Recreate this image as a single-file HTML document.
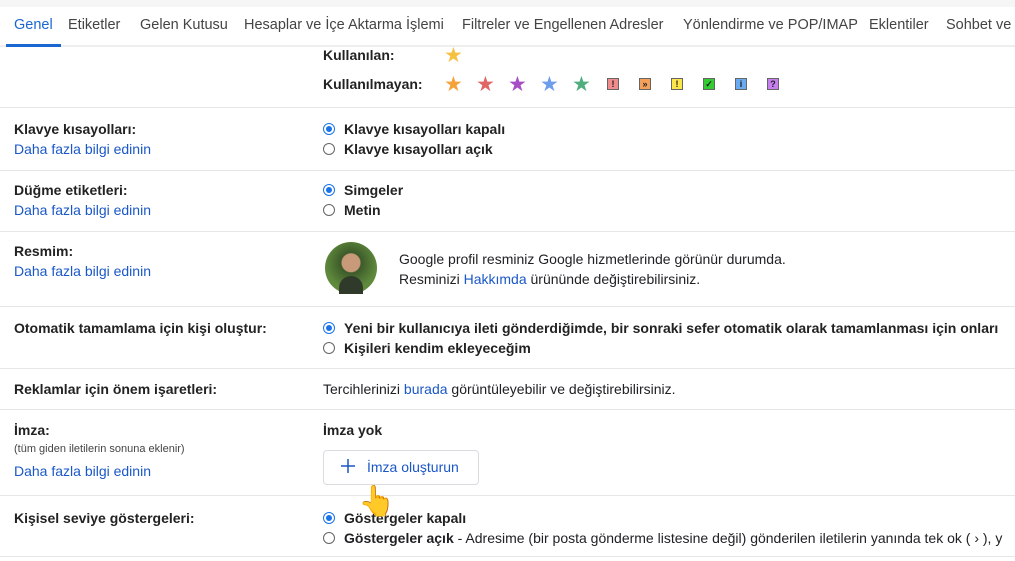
<!DOCTYPE html><html><head><meta charset="utf-8"><style>
body{margin:0;width:1015px;height:561px;overflow:hidden;background:#fff;font-family:"Liberation Sans",sans-serif;font-size:14px;color:#202124;position:relative}
.a{position:absolute;white-space:nowrap}
.tab{position:absolute;top:17px;font-size:14.5px;color:#444}
.hr{position:absolute;left:0;width:1015px;height:1px;background:#e6e6e6}
.b{font-weight:bold;color:#222}
.l{color:#1a57c7}
.r{position:absolute;width:10px;height:10px;border:1.5px solid #666;border-radius:50%;left:323px}
.r.on{border-color:#1a73e8}
.r.on::after{content:"";position:absolute;left:2px;top:2px;width:6px;height:6px;border-radius:50%;background:#1a73e8}
.st{position:absolute;top:73px;font-size:21px;line-height:24px}
.bx{position:absolute;top:78px;width:10px;height:10px;border:1px solid #666;font-size:9px;font-weight:bold;line-height:10px;text-align:center}
</style></head><body>
<div class="a" style="left:0;top:0;width:1015px;height:7px;background:#f6f6f6"></div>
<div class="tab" style="left:14px;color:#1a67d2">Genel</div>
<div class="tab" style="left:68px">Etiketler</div>
<div class="tab" style="left:140px">Gelen Kutusu</div>
<div class="tab" style="left:244px">Hesaplar ve İçe Aktarma İşlemi</div>
<div class="tab" style="left:462px">Filtreler ve Engellenen Adresler</div>
<div class="tab" style="left:683px">Yönlendirme ve POP/IMAP</div>
<div class="tab" style="left:869px">Eklentiler</div>
<div class="tab" style="left:946px">Sohbet ve</div>
<div class="hr" style="top:45px;background:#eee;height:2px"></div>
<div class="a" style="left:6px;top:44px;width:55px;height:3px;background:#1a67d2"></div>

<div class="a b" style="left:323px;top:47px">Kullanılan:</div>
<div class="st" style="left:444px;top:44px;color:#f6c142">★</div>
<div class="a b" style="left:323px;top:76px">Kullanılmayan:</div>
<div class="st" style="left:444px;color:#f5a23b">★</div>
<div class="st" style="left:476px;color:#e06666">★</div>
<div class="st" style="left:508px;color:#a74ec7">★</div>
<div class="st" style="left:540px;color:#6d9eeb">★</div>
<div class="st" style="left:572px;color:#4fae7d">★</div>
<div class="bx" style="left:607px;background:#f28b8b">!</div>
<div class="bx" style="left:639px;background:#f5a05a">»</div>
<div class="bx" style="left:671px;background:#fbe548">!</div>
<div class="bx" style="left:703px;background:#33cc33">✓</div>
<div class="bx" style="left:735px;background:#6aaaf0">i</div>
<div class="bx" style="left:767px;background:#c77ff0">?</div>
<div class="hr" style="top:107px"></div>

<div class="a b" style="left:14px;top:121px">Klavye kısayolları:</div>
<div class="a l" style="left:14px;top:141px">Daha fazla bilgi edinin</div>
<div class="r on" style="top:123px"></div><div class="a b" style="left:344px;top:121px">Klavye kısayolları kapalı</div>
<div class="r" style="top:143px"></div><div class="a b" style="left:344px;top:141px">Klavye kısayolları açık</div>
<div class="hr" style="top:170px"></div>

<div class="a b" style="left:14px;top:182px">Düğme etiketleri:</div>
<div class="a l" style="left:14px;top:202px">Daha fazla bilgi edinin</div>
<div class="r on" style="top:184px"></div><div class="a b" style="left:344px;top:182px">Simgeler</div>
<div class="r" style="top:204px"></div><div class="a b" style="left:344px;top:202px">Metin</div>
<div class="hr" style="top:231px"></div>

<div class="a b" style="left:14px;top:243px">Resmim:</div>
<div class="a l" style="left:14px;top:263px">Daha fazla bilgi edinin</div>
<div class="a" style="left:325px;top:242px;width:52px;height:52px;border-radius:50%;background:radial-gradient(circle at 50% 40%,#c99a7a 0 9px,#3d5a2a 10px,#5f8a3c 26px)"></div>
<div class="a" style="left:339px;top:276px;width:24px;height:18px;border-radius:12px 12px 0 0;background:#2f3a2a"></div>
<div class="a" style="left:399px;top:251px">Google profil resminiz Google hizmetlerinde görünür durumda.</div>
<div class="a" style="left:399px;top:271px">Resminizi <span class="l">Hakkımda</span> ürününde değiştirebilirsiniz.</div>
<div class="hr" style="top:306px"></div>

<div class="a b" style="left:14px;top:320px">Otomatik tamamlama için kişi oluştur:</div>
<div class="r on" style="top:322px"></div><div class="a b" style="left:344px;top:320px">Yeni bir kullanıcıya ileti gönderdiğimde, bir sonraki sefer otomatik olarak tamamlanması için onları</div>
<div class="r" style="top:342px"></div><div class="a b" style="left:344px;top:340px">Kişileri kendim ekleyeceğim</div>
<div class="hr" style="top:368px"></div>

<div class="a b" style="left:14px;top:381px">Reklamlar için önem işaretleri:</div>
<div class="a" style="left:323px;top:381px">Tercihlerinizi <span class="l">burada</span> görüntüleyebilir ve değiştirebilirsiniz.</div>
<div class="hr" style="top:409px"></div>

<div class="a b" style="left:14px;top:422px">İmza:</div>
<div class="a" style="left:14px;top:443px;font-size:11px;color:#444">(tüm giden iletilerin sonuna eklenir)</div>
<div class="a l" style="left:14px;top:463px">Daha fazla bilgi edinin</div>
<div class="a b" style="left:323px;top:422px">İmza yok</div>
<div class="a" style="left:323px;top:450px;width:154px;height:33px;border:1px solid #dadce0;border-radius:4px"></div>
<svg class="a" style="left:341px;top:459px" width="14" height="14"><path d="M7 0V14M0 7H14" stroke="#1a57c7" stroke-width="1.5"/></svg>
<div class="a l" style="left:367px;top:459px">İmza oluşturun</div>
<div class="hr" style="top:495px"></div>

<div class="a b" style="left:14px;top:510px">Kişisel seviye göstergeleri:</div>
<div class="r on" style="top:512px"></div><div class="a b" style="left:344px;top:510px">Göstergeler kapalı</div>
<div class="r" style="top:532px"></div><div class="a" style="left:344px;top:530px"><b>Göstergeler açık</b> - Adresime (bir posta gönderme listesine değil) gönderilen iletilerin yanında tek ok ( › ), y</div>
<div class="a" style="left:358px;top:484px;font-size:30px">👆</div>
<div class="hr" style="top:556px"></div>
</body></html>
